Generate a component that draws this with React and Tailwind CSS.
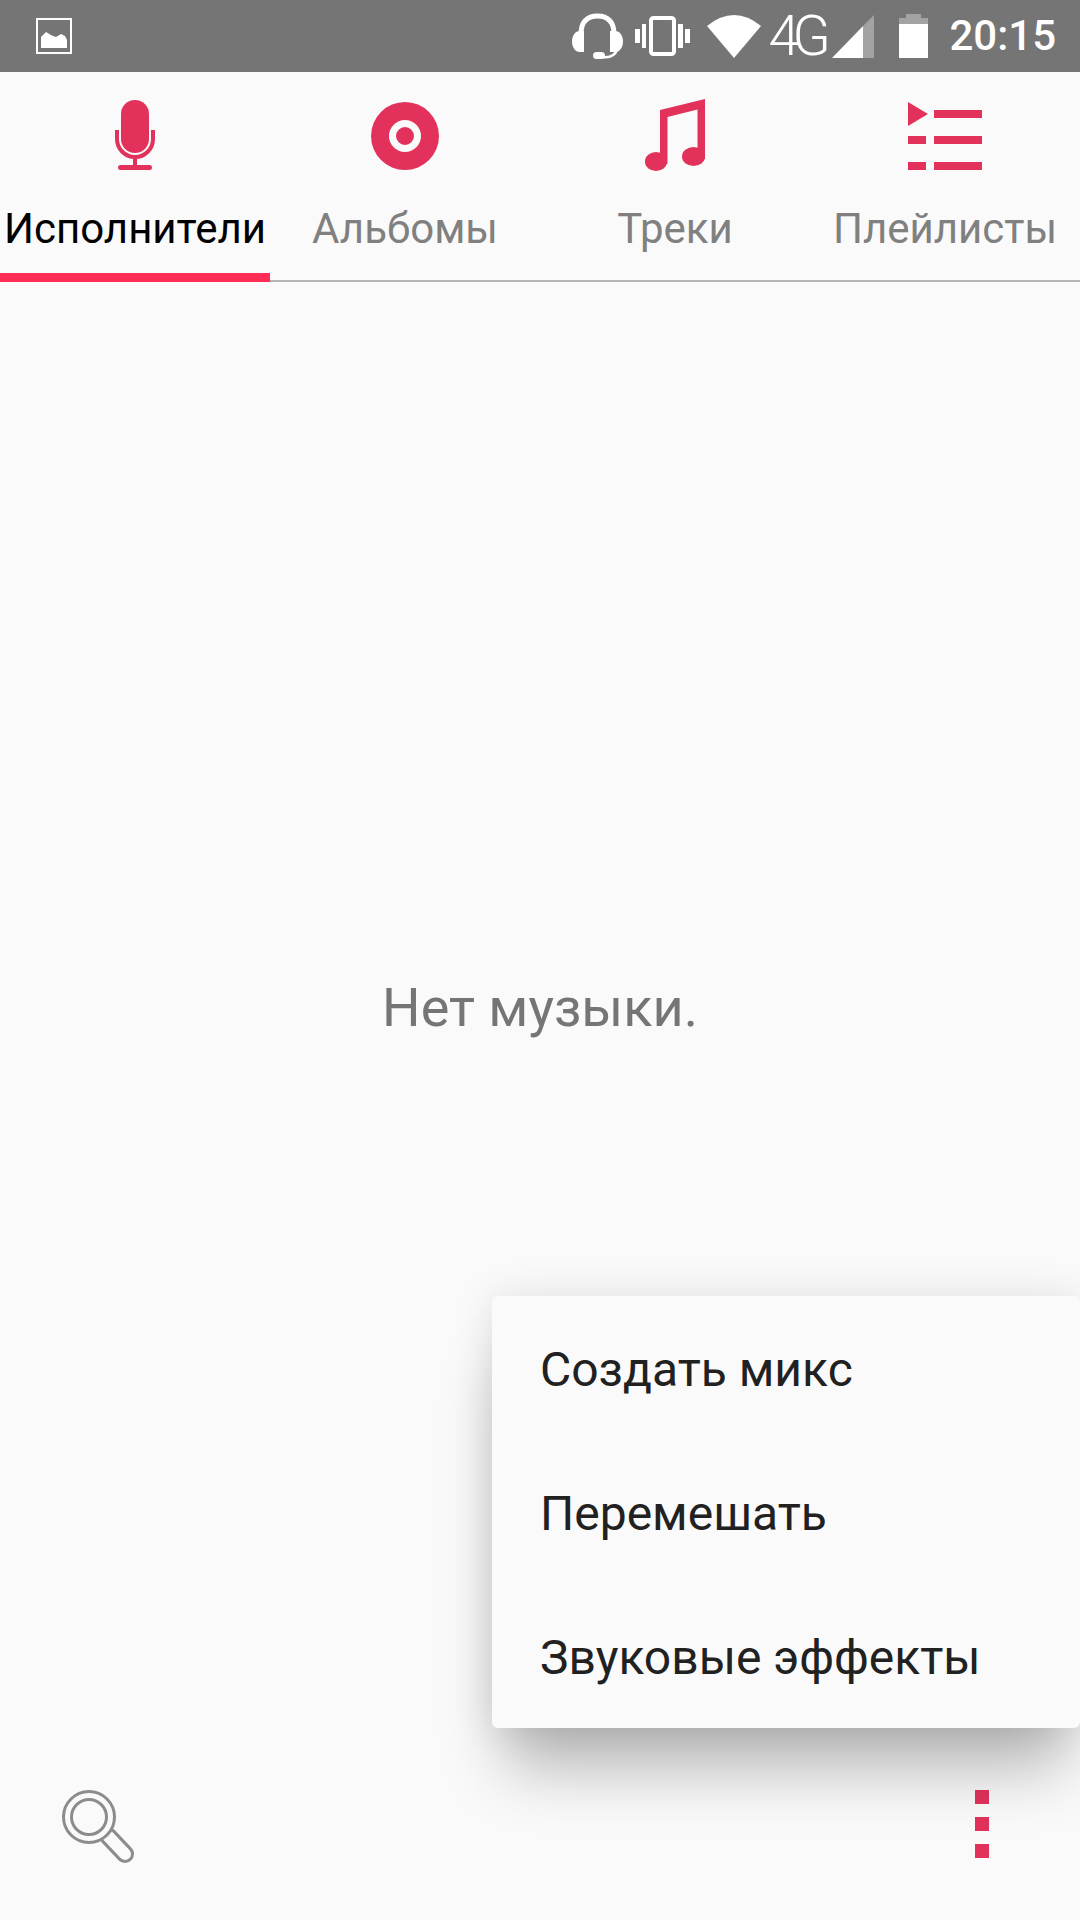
import React from "react";

const PINK = "#e2325c";

const tabs = [
  { label: "Исполнители", active: true, icon: <MicIcon /> },
  { label: "Альбомы", icon: <DiscIcon /> },
  { label: "Треки", icon: <NoteIcon /> },
  { label: "Плейлисты", icon: <ListIcon /> },
];

const menuItems = ["Создать микс", "Перемешать", "Звуковые эффекты"];

function MicIcon() {
  return (
    <svg width="40" height="70" viewBox="0 0 40 70" fill={PINK}>
      <rect x="6" y="0" width="28" height="53" rx="14" />
      <path d="M2 30v9a18 18 0 0 0 36 0v-9" fill="none" stroke={PINK} strokeWidth="4" />
      <rect x="18" y="56" width="4" height="10" />
      <rect x="3" y="65" width="34" height="5" rx="2.5" />
    </svg>
  );
}

function DiscIcon() {
  return (
    <svg width="68" height="70" viewBox="0 0 68 70">
      <circle cx="34" cy="36" r="34" fill={PINK} />
      <circle cx="34" cy="36" r="12.5" fill="none" stroke="#fafafa" strokeWidth="7" />
    </svg>
  );
}

function NoteIcon() {
  return (
    <svg width="60" height="72" viewBox="0 0 60 72" fill={PINK}>
      <path d="M15 11 60 0v60h-7.500V10.500L22.500 18V65H15z" />
      <ellipse cx="11" cy="62.500" rx="11" ry="9.500" />
      <ellipse cx="48.500" cy="57.500" rx="11.500" ry="9.500" />
    </svg>
  );
}

function ListIcon() {
  return (
    <svg width="74" height="70" viewBox="0 0 74 70" fill={PINK}>
      <path d="M0 2 20 14 0 26z" />
      <rect x="26" y="10" width="48" height="8" />
      <rect x="0" y="36" width="18" height="8" />
      <rect x="26" y="36" width="48" height="8" />
      <rect x="0" y="62" width="18" height="8" />
      <rect x="26" y="62" width="48" height="8" />
    </svg>
  );
}

function StatusBar() {
  return (
    <div className="flex h-[72px] shrink-0 items-center justify-between bg-[#757575] pl-[36px] pr-[24px] text-white">
      {/* notification picture */}
      <svg width="36" height="36" viewBox="0 0 36 36" fill="#fff">
        <rect x="1" y="1" width="34" height="34" fill="none" stroke="#fff" strokeWidth="2" />
        <path d="M5 30V19l5-5 5 3 2 1 3 1 5-3 4 2 2 4v8z" />
      </svg>

      <div className="flex items-center">
        {/* headset */}
        <svg width="51" height="47" viewBox="0 0 51 47" fill="#fff">
          <path d="M9 21C9 9 15 3 25.500 3S42 9 42 21" fill="none" stroke="#fff" strokeWidth="5" />
          <path d="M12 18v21H8c-5 0-8-5-8-10.500S3 18 8 18z" />
          <path d="M38 18v21h5c5 0 8-5 8-10.500S48 18 43 18z" />
          <path d="M31 44c8 1 12-2 14-7" fill="none" stroke="#fff" strokeWidth="2.500" />
          <rect x="21" y="39" width="12" height="7" rx="3.500" />
        </svg>
        {/* vibrate */}
        <svg className="ml-[12px]" width="55" height="40" viewBox="0 0 55 40" fill="#fff">
          <rect x="0" y="13" width="5" height="14" />
          <rect x="7" y="8" width="4" height="24" />
          <rect x="16" y="2" width="23" height="36" rx="2.500" fill="none" stroke="#fff" strokeWidth="4" />
          <rect x="43" y="8" width="5" height="24" />
          <rect x="50" y="13" width="5" height="14" />
        </svg>
        {/* wifi */}
        <svg className="ml-[17px]" width="54" height="43" viewBox="0 0 54 43" fill="#fff">
          <path d="M27 43 0 11Q27-11 54 11z" />
        </svg>
        <span className="ml-[7px] w-[58px] text-[56px] font-[350] leading-[44px] tracking-[-7px] font-['Roboto',sans-serif]">
          4G
        </span>
        {/* signal */}
        <svg className="ml-[6px]" width="42" height="43" viewBox="0 0 42 43" fill="#fff">
          <path d="M31 11 42 0v43H31z" fill="#a3a3a3" />
          <path d="M0 43 31 11v32z" />
        </svg>
        {/* battery */}
        <svg className="ml-[25px]" width="29" height="44" viewBox="0 0 29 44">
          <path d="M7 0h15v4h7v10H0V4h7z" fill="#a3a3a3" />
          <rect x="0" y="10" width="29" height="34" fill="#fff" />
        </svg>
        <span className="ml-[21px] text-[42px] font-medium leading-none font-['Roboto',sans-serif]">
          20:15
        </span>
      </div>
    </div>
  );
}

function SearchIcon() {
  return (
    <svg width="72" height="74" viewBox="0 0 72 74" fill="none">
      <path d="M46 46 63 64" stroke="#8c8c8c" strokeWidth="18" strokeLinecap="round" />
      <path d="M46 46 63 64" stroke="#fafafa" strokeWidth="12" strokeLinecap="round" />
      <circle cx="27" cy="27" r="21.500" fill="#fafafa" stroke="#fafafa" strokeWidth="10" />
      <circle cx="27" cy="27" r="25.500" stroke="#8c8c8c" strokeWidth="3" />
      <circle cx="27" cy="27" r="17.500" stroke="#8c8c8c" strokeWidth="3" />
    </svg>
  );
}

export default function App() {
  return (
    <div className="relative flex h-[1920px] w-[1080px] flex-col overflow-hidden bg-[#fafafa] font-['Roboto',sans-serif]">
      <StatusBar />

      {/* Tabs */}
      <div className="grid h-[210px] shrink-0 grid-cols-4">
        {tabs.map((tab) => (
          <div
            key={tab.label}
            className={`flex flex-col items-center pt-[27px] ${
              tab.active ? "border-b-[9px] border-[#ff2d55]" : "border-b-2 border-[#b4b4b4]"
            }`}
          >
            <div className="flex h-[72px] items-center">{tab.icon}</div>
            <span
              className={`mt-[33px] text-[42px] leading-[50px] whitespace-nowrap ${
                tab.active ? "text-black" : "text-[#808080]"
              }`}
            >
              {tab.label}
            </span>
          </div>
        ))}
      </div>

      {/* Empty state */}
      <div className="flex flex-1 items-center justify-center pb-[2px]">
        <span className="text-[54px] text-[#757575]">Нет музыки.</span>
      </div>

      {/* Bottom bar */}
      <div className="flex h-[186px] shrink-0 items-center justify-between pl-[62px] pr-[91px]">
        <SearchIcon />
        <div className="mb-[6px] flex flex-col gap-[13px]">
          <div className="h-[14px] w-[14px]" style={{ backgroundColor: PINK }} />
          <div className="h-[14px] w-[14px]" style={{ backgroundColor: PINK }} />
          <div className="h-[14px] w-[14px]" style={{ backgroundColor: PINK }} />
        </div>
      </div>

      {/* Overflow menu */}
      <div className="absolute left-[492px] top-[1296px] w-[588px] rounded-[6px] bg-[#fafafa] shadow-[0_54px_60px_-14px_rgba(0,0,0,0.27),0_0_40px_rgba(0,0,0,0.11)]">
        {menuItems.map((item) => (
          <div key={item} className="flex h-[144px] items-center pl-[48px] pt-[3px] text-[48px] text-[#212121]">
            {item}
          </div>
        ))}
      </div>
    </div>
  );
}
